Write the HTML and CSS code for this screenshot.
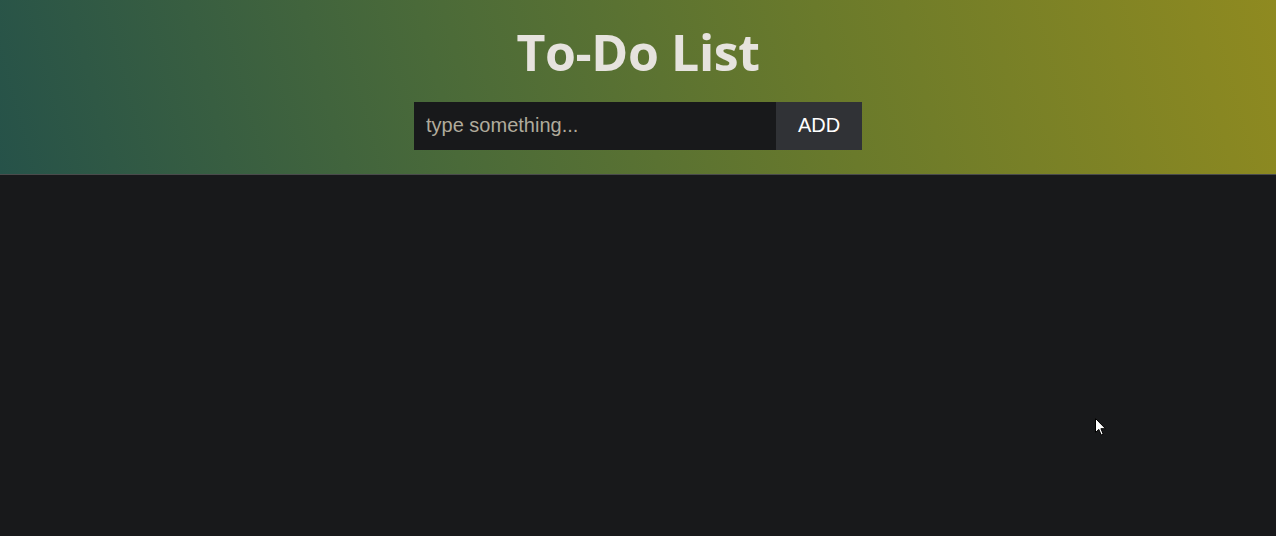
FILE: index.html
```html
<!DOCTYPE html>
<html>
<head>
<meta charset="utf-8">
<link rel="stylesheet" href="styles.css">
</head>
<body>
<header class="header">
  <h1 class="title">To-Do List</h1>
  <form class="form">
    <input class="input" type="text" placeholder="type something...">
    <button class="add" type="button">ADD</button>
  </form>
</header>
<main class="list"></main>
<svg class="cursor" width="12" height="19" viewBox="0 0 12 19"><path d="M0.5 0.5 L0.5 14.5 L3.8 11.4 L6.2 17 L8.2 16.1 L5.9 10.7 L10.5 10.7 Z" fill="#fff" stroke="#000" stroke-width="1"/></svg>
</body>
</html>
```
FILE: styles.css
```css
html, body {
  margin: 0;
  padding: 0;
  height: 100%;
}
body {
  background: #18191b;
  font-family: "Liberation Sans", Arial, sans-serif;
  position: relative;
  overflow: hidden;
}
.header {
  height: 175px;
  box-sizing: border-box;
  border-bottom: 1px solid #4a4b4c;
  background: linear-gradient(75deg, #265249 0%, #4a6a39 35%, #6a7a2b 65%, #8f8a20 100%);
  display: flex;
  flex-direction: column;
  align-items: center;
  padding-top: 24px;
}
.title {
  margin: 0;
  font-family: "Open Sans", "DejaVu Sans", sans-serif;
  font-weight: 700;
  font-size: 50px;
  line-height: 56px;
  color: #e6e3de;
  letter-spacing: -0.4px;
}
.form {
  display: flex;
  margin-top: 22px;
  height: 48px;
}
.input {
  width: 362px;
  height: 48px;
  box-sizing: border-box;
  border: none;
  outline: none;
  background: #18191b;
  color: #e6e3de;
  padding: 0 12px 2px;
  font-family: "Liberation Sans", Arial, sans-serif;
  font-size: 20px;
}
.input::placeholder {
  color: #b0ab9c;
}
.add {
  width: 86px;
  height: 48px;
  border: none;
  background: #303236;
  color: #ffffff;
  font-family: "Liberation Sans", Arial, sans-serif;
  font-size: 20px;
  padding: 0 0 2px;
}
.cursor {
  position: absolute;
  left: 1095px;
  top: 418px;
}
```
